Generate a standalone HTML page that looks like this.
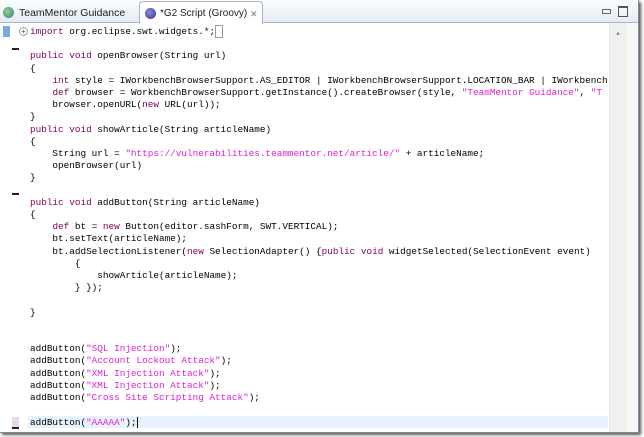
<!DOCTYPE html>
<html><head><style>
body{margin:0;width:644px;height:437px;background:#fff;overflow:hidden;position:relative;font-family:"Liberation Sans",sans-serif}
#win{position:absolute;left:0;top:0;width:638px;height:432px;border-right:1px solid #7f8aa0;border-bottom:1px solid #7f8aa0;box-shadow:2px 2px 3px #555;background:#fff;overflow:hidden}
#tabs{position:absolute;left:0;top:0;width:638px;height:22px;background:linear-gradient(#fbfcfd,#e6ebf2);border-bottom:1px solid #a9b6c8}
.tab{position:absolute;top:3px;height:20px;font-size:10.5px;line-height:20px;color:#222}
#t2{left:139px;width:122px;background:#fff;border:1px solid #a9b6c8;border-bottom:none;border-radius:4px 4px 0 0;top:1px;height:22px;line-height:24px;font-size:10px}
.ic{position:absolute;top:4px;width:11px;height:11px;border-radius:50%}
#code{position:absolute;left:30px;top:26px;font-family:"Liberation Mono",monospace;font-size:9.35px;line-height:12.2px;white-space:pre;color:#000}
.k{color:#7f0055}.s{color:#e020d0}
#cur{position:absolute;left:28px;top:416px;width:580px;height:12px;background:#e8f2fe}
#sb{position:absolute;left:609px;top:23px;width:17px;height:409px;background:#f0f0f0;border-left:1px solid #e4e4e4}
#sb2{position:absolute;left:627px;top:23px;width:11px;height:409px;background:#f8f8f8}
.m{position:absolute;left:12px;width:7px;height:2px;background:#222}
</style></head><body>
<div id="win">
<div id="tabs">
 <div class="tab" style="left:3px"><span class="ic" style="left:0;background:radial-gradient(circle at 40% 40%,#9cd66b,#2a72c0)"></span><span style="position:absolute;left:16px;white-space:nowrap">TeamMentor Guidance</span></div>
 <div class="tab" id="t2"><span class="ic" style="left:5px;top:6px;background:radial-gradient(circle at 40% 40%,#8a8ee0,#2b2f8a)"></span><span style="position:absolute;left:20px;white-space:nowrap">*G2 Script (Groovy)</span><span style="position:absolute;left:110px;color:#777;font-size:9px">✕</span></div>
 <div style="position:absolute;left:602px;top:9px;width:7px;height:3px;border:1px solid #666"></div>
 <div style="position:absolute;left:618px;top:6px;width:8px;height:8px;border:1px solid #555;border-top-width:2px"></div>
</div>
<div style="position:absolute;left:3px;top:26px;width:7px;height:11px;background:#7fa7e8"></div>
<div style="position:absolute;left:19px;top:27px;width:7px;height:7px;border:1px solid #8aa;border-radius:50%;font-size:8px;line-height:7px;text-align:center;color:#456">+</div>
<div class="m" style="top:48px"></div>
<div class="m" style="top:193px"></div>
<div style="position:absolute;left:12px;top:417px;width:7px;height:11px;background:#e8d8e8"></div>
<div class="m" style="top:427px"></div>
<div id="sb"></div><div id="sb2"></div>
<div style="position:absolute;left:615px;top:31px;font-size:6px;color:#888">▲</div>
<div id="cur"></div>
<div id="code"><span class="k">import</span> org.eclipse.swt.widgets.*;<span style="border:1px solid #999">&nbsp;</span>

<span class="k">public</span> <span class="k">void</span> openBrowser(String url)
{
    <span class="k">int</span> style = IWorkbenchBrowserSupport.AS_EDITOR | IWorkbenchBrowserSupport.LOCATION_BAR | IWorkbench
    <span class="k">def</span> browser = WorkbenchBrowserSupport.getInstance().createBrowser(style, <span class="s">"TeamMentor Guidance"</span>, <span class="s">"T</span>
    browser.openURL(<span class="k">new</span> URL(url));
}
<span class="k">public</span> <span class="k">void</span> showArticle(String articleName)
{
    String url = <span class="s">"https://vulnerabilities.teammentor.net/article/"</span> + articleName;
    openBrowser(url)
}

<span class="k">public</span> <span class="k">void</span> addButton(String articleName)
{
    <span class="k">def</span> bt = <span class="k">new</span> Button(editor.sashForm, SWT.VERTICAL);
    bt.setText(articleName);
    bt.addSelectionListener(<span class="k">new</span> SelectionAdapter() {<span class="k">public</span> <span class="k">void</span> widgetSelected(SelectionEvent event)
        {
            showArticle(articleName);
        } });

}


addButton(<span class="s">"SQL Injection"</span>);
addButton(<span class="s">"Account Lockout Attack"</span>);
addButton(<span class="s">"XML Injection Attack"</span>);
addButton(<span class="s">"XML Injection Attack"</span>);
addButton(<span class="s">"Cross Site Scripting Attack"</span>);

addButton(<span class="s">"AAAAA"</span>);<span style="border-left:1px solid #000"></span></div>
</div>
</body></html>
